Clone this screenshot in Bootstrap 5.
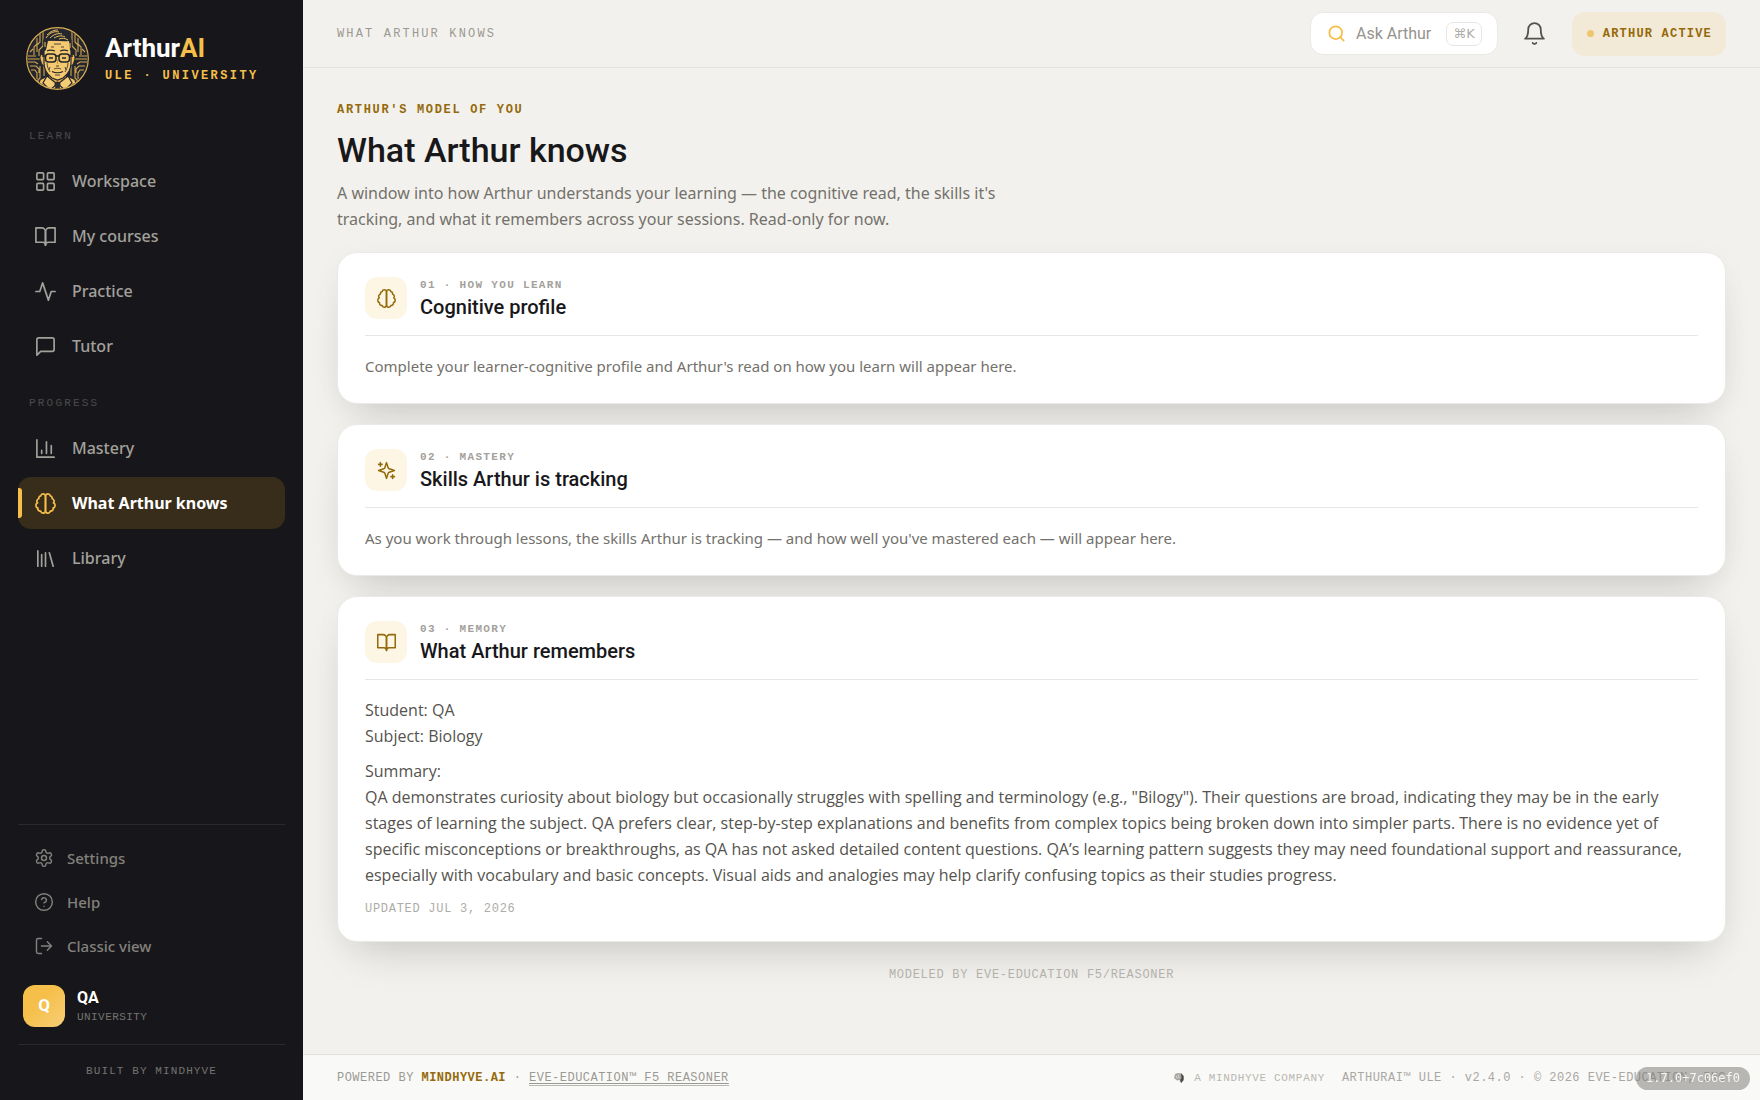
<!DOCTYPE html>
<html lang="en">
<head>
<meta charset="utf-8">
<meta name="viewport" content="width=device-width, initial-scale=1">
<title>What Arthur knows</title>
<link rel="stylesheet" href="https://cdn.jsdelivr.net/npm/bootstrap@5.3.0/dist/css/bootstrap.min.css">
<style>
  :root { --ink:#18181b; --gold:#f5bf4a; --bronze:#946a0a; --paper:#f3f1ed; --ui:Roboto,"Noto Sans",sans-serif; --read:"Open Sans","Noto Sans",sans-serif; --code:"Liberation Mono","DejaVu Sans Mono",monospace; }
  body { background:var(--paper); color:var(--ink); font-family:var(--ui); }
  svg { flex:none; display:block; }
  .ico { fill:none; stroke:currentColor; stroke-width:1.75; stroke-linecap:round; stroke-linejoin:round; }
  .ico-bold { stroke-width:2.25; }
  .mono { font-family:var(--code); font-size:12px; line-height:16px; text-transform:uppercase; }
  .mono-sm { font-size:11px; }

  .side { width:303px; flex:none; background:#17171b; padding:27px 18px 0; position:sticky; top:0; height:100vh; }
  .brand { gap:16px; padding-left:8px; margin-bottom:38px; }
  .brand-name { font-size:26px; line-height:28px; font-weight:700; color:#fff; }
  .brand-name span, .brand-sub { color:var(--gold); }
  .brand-sub { letter-spacing:.2em; font-weight:700; margin-top:6px; }
  .side-label { color:#4b4a4b; letter-spacing:.2em; padding-left:11px; margin-bottom:11px; }
  .side-nav { gap:3px; margin-bottom:23px; }
  .side-nav .nav-link { height:52px; border-radius:13px; padding:0 16px; gap:15px; color:#a3a19b; font-family:"Noto Sans",sans-serif; font-size:16px; font-weight:500; position:relative; }
  .side-nav .nav-link.active { background:#382d1b; color:#fff; font-weight:700; }
  .side-nav .nav-link.active svg { color:var(--gold); }
  .side-nav .nav-link.active::before { content:""; position:absolute; left:0; top:11px; width:4px; height:30px; border-radius:0 3px 3px 0; background:var(--gold); }
  .side-rule { border-top:1px solid #2a2a2d; }
  .side-foot { padding-top:11px; }
  .side-foot .nav-link { height:44px; padding:0 16px; gap:13px; color:#83817c; font-family:"Noto Sans",sans-serif; font-size:15px; font-weight:500; }
  .who { gap:12px; padding:17px 5px; }
  .avatar { width:42px; height:42px; border-radius:12px; background:linear-gradient(135deg,#f5bf4a 40%,#f7cf78); color:#fff; font-weight:700; font-size:17px; }
  .who-name { color:#fff; font-size:16px; line-height:22px; font-weight:700; }
  .who-role { color:#75736f; letter-spacing:.04em; }
  .built { color:#75736f; letter-spacing:.1em; padding:18px 0 21px; }

  .top { height:68px; border-bottom:1px solid #e3e1dc; padding:0 34px; }
  .crumb { color:#9b9993; letter-spacing:.18em; }
  .ask { height:43px; border:1px solid #ebe9e5; border-radius:13px; background:#fff; padding:0 15px 0 16px; gap:10px; color:#95938e; font-size:16px; }
  .ask svg { color:var(--gold); }
  .ask kbd { background:#fff; border:1px solid #e8e6e2; border-radius:7px; color:#b0aea9; font:13px/20px "DejaVu Sans",sans-serif; padding:1px 6px; margin-left:5px; }
  .bell { width:44px; height:44px; color:#55534e; margin:0 15px; }
  .live { height:44px; border-radius:13px; background:#f2e9d7; color:var(--bronze); padding:0 14px 0 15px; gap:9px; }
  .live .mono { font-weight:700; letter-spacing:.1em; }
  .dot { width:7px; height:7px; border-radius:50%; background:#eec66e; }

  main { padding:34px 34px 71px; }
  .eyebrow { color:var(--bronze); font-weight:700; letter-spacing:.14em; }
  h1 { font-size:34px; line-height:44px; font-weight:500; margin:10px 0 8px; }
  .intro { font-family:"Noto Sans",sans-serif; font-size:16px; line-height:26px; color:#73716c; max-width:700px; margin-bottom:20px; }
  .panels { gap:20px; }
  .panel { background:#fff; border:1px solid #ebe9e5; border-radius:20px; padding:24px 27px; box-shadow:0 22px 44px -20px rgba(24,24,27,.22), 0 4px 30px rgba(24,24,27,.03); }
  .panel-head { gap:13px; padding-bottom:16px; border-bottom:1px solid #e8e6e2; margin-bottom:17px; }
  .tile { width:42px; height:42px; border-radius:12px; background:#fdf6e4; color:var(--bronze); }
  .panel-no { color:#a3a19c; font-weight:700; letter-spacing:.12em; line-height:16px; }
  h2 { font-size:20px; line-height:24px; font-weight:500; margin:2px 0 0; }
  .empty { font-family:"Noto Sans",sans-serif; font-size:15px; line-height:26px; color:#73716c; margin:0; }
  .memory { font-family:var(--read); font-size:16px; line-height:26px; color:#55534e; }
  .memory p { margin:0 0 9px; }
  .stamp { color:#aeaca7; letter-spacing:.06em; margin-top:13px; }
  .model { color:#b3b1ac; letter-spacing:.06em; margin-top:25px; }

  footer { height:46px; background:#f9f9f7; border-top:1px solid #e3e1dc; padding:0 34px; color:#9b9993; }
  footer .mono { letter-spacing:.04em; }
  footer a { color:var(--bronze); font-weight:700; text-decoration:none; }
  footer a.engine { color:#9b9993; font-weight:400; text-decoration:underline; text-underline-offset:2px; border-bottom:1px solid #b9b7b2; }
  footer .maker { letter-spacing:.06em; color:#b9b7b2; margin-right:17px; gap:8px; }
  .legal { color:#a9a7a2; }
  .build { position:fixed; right:10px; bottom:10px; height:23px; line-height:23px; padding:0 10px; border-radius:12px; background:rgba(122,120,116,.52); color:#f6f6f4; font-family:"DejaVu Sans Mono",monospace; font-size:12px; }
</style>
</head>
<body>
<svg width="0" height="0" class="position-absolute" aria-hidden="true">
  <defs>
    <symbol id="brain" viewBox="0 0 24 24"><path d="M9.5 2A2.5 2.5 0 0 1 12 4.500v15a2.500 2.500 0 0 1-4.960.440 2.500 2.500 0 0 1-2.960-3.080 3 3 0 0 1-.340-5.580 2.500 2.500 0 0 1 1.320-4.240 2.500 2.500 0 0 1 1.980-3A2.500 2.500 0 0 1 9.500 2Z"/><path d="M14.500 2A2.500 2.500 0 0 0 12 4.500v15a2.500 2.500 0 0 0 4.960.440 2.500 2.500 0 0 0 2.960-3.080 3 3 0 0 0 .340-5.580 2.500 2.500 0 0 0-1.320-4.240 2.500 2.500 0 0 0-1.980-3A2.500 2.500 0 0 0 14.500 2Z"/></symbol>
    <symbol id="book" viewBox="0 0 24 24"><path d="M2 3h6a4 4 0 0 1 4 4v14a3 3 0 0 0-3-3H2z"/><path d="M22 3h-6a4 4 0 0 0-4 4v14a3 3 0 0 1 3-3h7z"/></symbol>
  </defs>
</svg>
<div class="d-flex">
  <aside class="side d-flex flex-column">
    <div class="brand d-flex align-items-center">
      <svg width="63" height="63" viewBox="6 7 63 63" role="img" aria-label="Arthur portrait">
        <defs><clipPath id="disc"><circle cx="37.500" cy="38.500" r="30"/></clipPath></defs>
        <circle cx="37.500" cy="38.500" r="30.800" fill="#24272d" stroke="#d9ad55" stroke-width="1.200"/>
        <g clip-path="url(#disc)">
          <g fill="none" stroke="#d1a650" stroke-width="1.100">
            <path d="M20 14v8l-3 3v7M17 18v6l-3 3v8M23 12v14l-4 4v6M8 36h8M8 39h12M8 42h7l3 2M10 46h6l3 3v4M11 50h4l2 3v6M20 46v12l-3 3M14 31v2M24 44v12M10 32l3-3"/>
            <path d="M55 14v8l3 3v7M58 18v6l3 3v8M52 12v14l4 4v6M67 36h-8M67 39H55M67 42h-7l-3 2M65 46h-6l-3 3v4M64 50h-4l-2 3v6M55 46v12l3 3M61 31v2M51 44v12M65 32l-3-3"/>
          </g>
          <path d="M9 72l5-9 13-6h21l13 6 5 9z" fill="#f0c368"/>
          <path d="M29 51h17v9l-8.500 9-8.500-9z" fill="#d9a947"/>
          <path d="M27 56l-4 7 7 7 7-6zM48 56l4 7-7 7-7-6z" fill="#f5cd76" stroke="#24272d" stroke-width="1.200"/>
          <path d="M35 64l2.500-2 2.500 2-1 3 2 6h-7l2-6zM20 60l-3 10M55 60l3 10M24 66l4 7M51 66l-4 7" fill="#33312f" stroke="#24272d" stroke-width="1.200"/>
          <path d="M24 35c-4-2-5 2-3 7 1 3 2 4 4 3M51 35c4-2 5 2 3 7-1 3-2 4-4 3" fill="#e9b957" stroke="#24272d" stroke-width="1"/>
          <path d="M24 20h27v23c0 8-4 12-8 15l-5.500 2-5.500-2c-4-3-8-7-8-15z" fill="#f4c96f" stroke="#24272d" stroke-width="1.200"/>
          <path d="M23 32l1-16c3-5 9-7 15-6 7 1 12 5 12 11l1 11-2-2-1-9c-7 1-14-1-21 0l-2 9z" fill="#24272d"/>
          <g fill="none" stroke="#efc167" stroke-width="1"><path d="M26 18c4-6 9-7 13-6M30 18c4-4 8-5 12-4M34 18c4-2 7-3 11-1M39 19c3-1 6-1 9 1M25 22v5M50 23v5M27 15c4-4 7-5 11-5"/></g>
          <g fill="none" stroke="#24272d"><path stroke-width=".8" d="M34 24h7M31 27h3M41 27h3M27 43c0 4 2 7 3 9M48 43c0 4-2 7-3 9M34 49c2-1 5-1 7 0M35 55h5M36 46h3M30 47l-1 3M45 47l1 3"/><path stroke-width="1.200" d="M32 51.500c3 1.500 8 1.500 11 0M27 31c2-1 5-1 8 0M40 31c3-1 6-1 8 0"/></g>
          <g fill="#f1c468" stroke="#202329" stroke-width="1.500"><rect x="25.500" y="34" width="10.500" height="8" rx="3"/><rect x="39" y="34" width="10.500" height="8" rx="3"/><path d="M36 36h3M22 36h4M53 36h-4"/></g>
          <path d="M29 38h4M42 38h4" stroke="#24272d" stroke-width="1.400"/>
          <path d="M37.500 39v5" stroke="#c8963b" stroke-width="1"/>
        </g>
      </svg>
      <div>
        <div class="brand-name">Arthur<span>AI</span></div>
        <div class="brand-sub mono">ULE · University</div>
      </div>
    </div>

    <div class="side-label mono mono-sm">Learn</div>
    <nav class="side-nav nav flex-column" aria-label="Learn">
      <a class="nav-link d-flex align-items-center" href="#"><svg class="ico" width="23" height="23" viewBox="0 0 24 24"><rect x="3" y="3" width="7" height="7" rx="1"/><rect x="14" y="3" width="7" height="7" rx="1"/><rect x="14" y="14" width="7" height="7" rx="1"/><rect x="3" y="14" width="7" height="7" rx="1"/></svg>Workspace</a>
      <a class="nav-link d-flex align-items-center" href="#"><svg class="ico" width="23" height="23"><use href="#book"/></svg>My courses</a>
      <a class="nav-link d-flex align-items-center" href="#"><svg class="ico" width="23" height="23" viewBox="0 0 24 24"><path d="M22 12h-4l-3 9L9 3l-3 9H2"/></svg>Practice</a>
      <a class="nav-link d-flex align-items-center" href="#"><svg class="ico" width="23" height="23" viewBox="0 0 24 24"><path d="M21 15a2 2 0 0 1-2 2H7l-4 4V5a2 2 0 0 1 2-2h14a2 2 0 0 1 2 2z"/></svg>Tutor</a>
    </nav>

    <div class="side-label mono mono-sm">Progress</div>
    <nav class="side-nav nav flex-column" aria-label="Progress">
      <a class="nav-link d-flex align-items-center" href="#"><svg class="ico" width="23" height="23" viewBox="0 0 24 24"><path d="M3 3v18h18M18 17V9M13 17V5M8 17v-3"/></svg>Mastery</a>
      <a class="nav-link active d-flex align-items-center" href="#" aria-current="page"><svg class="ico" width="23" height="23"><use href="#brain"/></svg>What Arthur knows</a>
      <a class="nav-link d-flex align-items-center" href="#"><svg class="ico" width="23" height="23" viewBox="0 0 24 24"><path d="m16 6 4 14M12 6v14M8 8v12M4 4v16"/></svg>Library</a>
    </nav>

    <div class="side-rule mt-auto">
      <nav class="side-foot nav flex-column" aria-label="Account">
        <a class="nav-link d-flex align-items-center" href="#"><svg class="ico" width="20" height="20" viewBox="0 0 24 24"><path d="M12.220 2h-.440a2 2 0 0 0-2 2v.180a2 2 0 0 1-1 1.730l-.430.250a2 2 0 0 1-2 0l-.150-.080a2 2 0 0 0-2.730.730l-.220.380a2 2 0 0 0 .730 2.730l.150.100a2 2 0 0 1 1 1.720v.510a2 2 0 0 1-1 1.740l-.150.090a2 2 0 0 0-.730 2.730l.220.380a2 2 0 0 0 2.730.730l.150-.080a2 2 0 0 1 2 0l.430.250a2 2 0 0 1 1 1.730V20a2 2 0 0 0 2 2h.440a2 2 0 0 0 2-2v-.180a2 2 0 0 1 1-1.730l.430-.250a2 2 0 0 1 2 0l.150.080a2 2 0 0 0 2.730-.730l.220-.390a2 2 0 0 0-.730-2.730l-.150-.080a2 2 0 0 1-1-1.740v-.500a2 2 0 0 1 1-1.740l.150-.090a2 2 0 0 0 .730-2.730l-.220-.380a2 2 0 0 0-2.730-.730l-.150.080a2 2 0 0 1-2 0l-.430-.250a2 2 0 0 1-1-1.730V4a2 2 0 0 0-2-2z"/><circle cx="12" cy="12" r="3"/></svg>Settings</a>
        <a class="nav-link d-flex align-items-center" href="#"><svg class="ico" width="20" height="20" viewBox="0 0 24 24"><circle cx="12" cy="12" r="10"/><path d="M9.090 9a3 3 0 0 1 5.830 1c0 2-3 3-3 3M12 17h.010"/></svg>Help</a>
        <a class="nav-link d-flex align-items-center" href="#"><svg class="ico" width="20" height="20" viewBox="0 0 24 24"><path d="M9 21H5a2 2 0 0 1-2-2V5a2 2 0 0 1 2-2h4M16 17l5-5-5-5M21 12H9"/></svg>Classic view</a>
      </nav>
      <div class="who d-flex align-items-center">
        <div class="avatar d-flex align-items-center justify-content-center">Q</div>
        <div>
          <div class="who-name">QA</div>
          <div class="who-role mono mono-sm">University</div>
        </div>
      </div>
    </div>
    <div class="side-rule built mono mono-sm text-center">Built by MindHyve</div>
  </aside>

  <div class="flex-grow-1 d-flex flex-column min-vh-100">
    <header class="top d-flex align-items-center">
      <div class="crumb mono me-auto">What Arthur knows</div>
      <button type="button" class="ask d-flex align-items-center"><svg class="ico ico-bold" width="19" height="19" viewBox="0 0 24 24"><circle cx="11" cy="11" r="8"/><path d="m21 21-4.300-4.300"/></svg>Ask Arthur<kbd>⌘K</kbd></button>
      <button type="button" class="bell btn p-0 border-0 d-flex align-items-center justify-content-center" aria-label="Notifications"><svg class="ico" width="25" height="25" viewBox="0 0 24 24"><path d="M6 8a6 6 0 0 1 12 0c0 7 3 9 3 9H3s3-2 3-9M10.300 21a1.940 1.940 0 0 0 3.400 0"/></svg></button>
      <div class="live d-flex align-items-center"><span class="dot"></span><span class="mono">Arthur active</span></div>
    </header>

    <main class="flex-grow-1">
      <div class="eyebrow mono">Arthur's model of you</div>
      <h1>What Arthur knows</h1>
      <p class="intro">A window into how Arthur understands your learning — the cognitive read, the skills it's tracking, and what it remembers across your sessions. Read-only for now.</p>

      <div class="panels d-flex flex-column">
        <section class="panel">
          <div class="panel-head d-flex align-items-center">
            <div class="tile d-flex align-items-center justify-content-center"><svg class="ico" width="21" height="21"><use href="#brain"/></svg></div>
            <div><div class="panel-no mono mono-sm">01 · How you learn</div><h2>Cognitive profile</h2></div>
          </div>
          <p class="empty">Complete your learner-cognitive profile and Arthur's read on how you learn will appear here.</p>
        </section>

        <section class="panel">
          <div class="panel-head d-flex align-items-center">
            <div class="tile d-flex align-items-center justify-content-center"><svg class="ico" width="21" height="21" viewBox="0 0 24 24"><path d="m12 3-1.900 5.800a2 2 0 0 1-1.300 1.300L3 12l5.800 1.900a2 2 0 0 1 1.300 1.300L12 21l1.900-5.800a2 2 0 0 1 1.300-1.300L21 12l-5.800-1.900a2 2 0 0 1-1.300-1.300ZM5 3v4M19 17v4M3 5h4M17 19h4"/></svg></div>
            <div><div class="panel-no mono mono-sm">02 · Mastery</div><h2>Skills Arthur is tracking</h2></div>
          </div>
          <p class="empty">As you work through lessons, the skills Arthur is tracking — and how well you've mastered each — will appear here.</p>
        </section>

        <section class="panel">
          <div class="panel-head d-flex align-items-center">
            <div class="tile d-flex align-items-center justify-content-center"><svg class="ico" width="21" height="21"><use href="#book"/></svg></div>
            <div><div class="panel-no mono mono-sm">03 · Memory</div><h2>What Arthur remembers</h2></div>
          </div>
          <div class="memory">
            <p>Student: QA<br>Subject: Biology</p>
            <p class="mb-0">Summary:<br>QA demonstrates curiosity about biology but occasionally struggles with spelling and terminology (e.g., "Bilogy"). Their questions are broad, indicating they may be in the early stages of learning the subject. QA prefers clear, step-by-step explanations and benefits from complex topics being broken down into simpler parts. There is no evidence yet of specific misconceptions or breakthroughs, as QA has not asked detailed content questions. QA’s learning pattern suggests they may need foundational support and reassurance, especially with vocabulary and basic concepts. Visual aids and analogies may help clarify confusing topics as their studies progress.</p>
          </div>
          <div class="stamp mono">Updated Jul 3, 2026</div>
        </section>
      </div>

      <div class="model mono text-center">Modeled by EVE-Education F5/Reasoner</div>
    </main>

    <footer class="d-flex align-items-center justify-content-between">
      <div class="mono">Powered by <a href="#">MindHyve.ai</a> · <a class="engine" href="#">EVE-Education™ F5 Reasoner</a></div>
      <div class="d-flex align-items-center">
        <div class="maker mono mono-sm d-flex align-items-center"><svg width="14" height="12" viewBox="0 0 14 12"><path d="M3 2l3-1 4 .500 2 3-.500 4L9 11 7.500 8 5 8.500 2 6z" fill="#a6a5a1"/><path d="M9 1.500l2.500 2.500v4L9 11l-.800-3 1.300-2z" fill="#4a4947"/><path d="M4 3.500l1 3M6.500 2.500l.500 4" stroke="#dddcd8"/></svg>A MindHyve company</div>
        <div class="legal mono text-nowrap">ARTHURAI™ ULE · <span class="text-lowercase">v2.4.0</span> · © 2026 EVE-Education, Inc</div>
      </div>
    </footer>
  </div>
</div>
<div class="build">1.7.0+7c06ef0</div>
<script src="https://cdn.jsdelivr.net/npm/bootstrap@5.3.0/dist/js/bootstrap.bundle.min.js"></script>
</body>
</html>
